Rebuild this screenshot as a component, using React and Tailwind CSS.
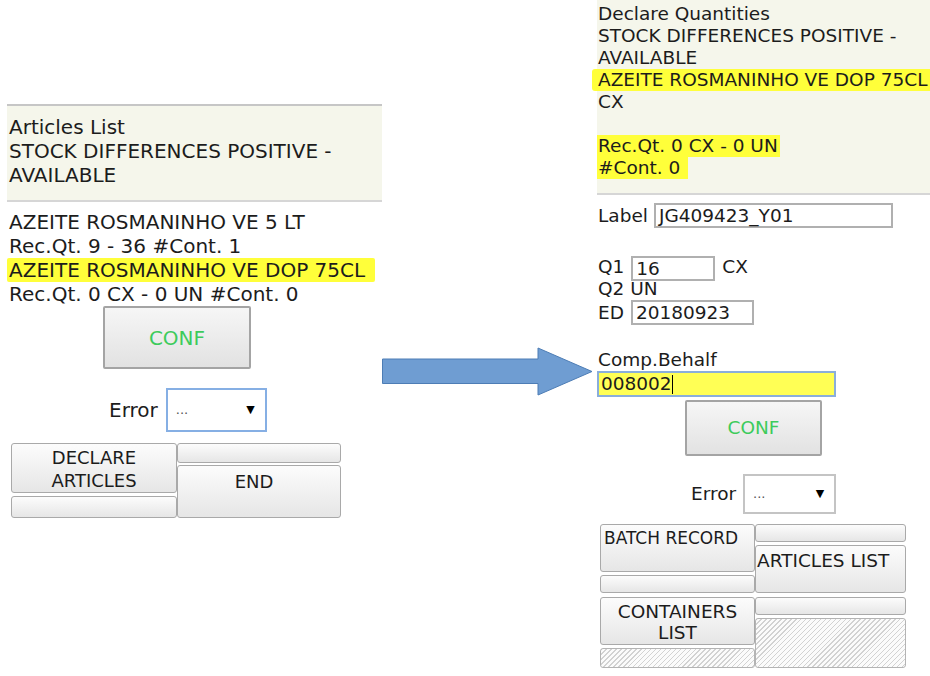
import React from 'react';

const font = "font-['DejaVu_Sans',sans-serif]";
const btn = 'border border-[#a9a9a9] rounded-[3px] bg-linear-to-b from-[#fcfcfc] to-[#e6e6e6]';
const hatch = 'border border-[#b4b4b4] rounded-[3px] bg-[repeating-linear-gradient(135deg,#d2d2d2_0px,#d2d2d2_1px,#fbfbfb_1px,#fbfbfb_3.5px)]';

function Select({ className }) {
  return (
    <div className={`flex items-center justify-between bg-white pl-2 pr-[10px] ${className}`}>
      <span className="text-[13px] text-[#555]">...</span>
      <span className="text-[11px] text-black">▼</span>
    </div>
  );
}

function Arrow() {
  return (
    <svg width="212" height="52" viewBox="0 0 212 52" className="mt-[346px] shrink-0">
      <path
        d="M0.5 13 L156 13 L156 2 L210 25.5 L156 49 L156 37.5 L0.5 37.5 Z"
        fill="#6f9dd2"
        stroke="#4d7db5"
        strokeWidth="1"
      />
    </svg>
  );
}

function LeftPanel() {
  return (
    <div className="w-[375px] mt-[104px] shrink-0 text-[20px] text-[#1c1c1c]">
      <div className="border-t-2 border-[#c6c6c6] border-b-2 border-b-[#d6d6d6] bg-[#f5f6eb] pt-[9px] pb-[13px] pl-[2px] leading-[24px]">
        <div>Articles List</div>
        <div>STOCK DIFFERENCES POSITIVE -</div>
        <div>AVAILABLE</div>
      </div>
      <div className="pt-[8px] pl-[2px] leading-[24px]">
        <div>AZEITE ROSMANINHO VE 5 LT</div>
        <div>Rec.Qt. 9 - 36 #Cont. 1</div>
        <div className="-ml-[2px] pl-[2px] w-[368px] bg-[#ffff3a] rounded-[2px]">AZEITE ROSMANINHO VE DOP 75CL</div>
        <div>Rec.Qt. 0 CX - 0 UN #Cont. 0</div>
      </div>
      <div className="ml-[96px] w-[148px] h-[63px] flex items-center justify-center border-2 border-[#a4a4a4] rounded-[2px] bg-linear-to-b from-[#f6f6f6] to-[#e2e2e2] text-[#3dcb5c]">
        CONF
      </div>
      <div className="ml-[102px] mt-[19px] flex items-center">
        <span>Error</span>
        <Select className="ml-[8px] w-[101px] h-[44px] border-2 border-[#86afe4]" />
      </div>
      <div className="ml-[4px] mt-[11px] w-[330px] flex text-[18px] leading-[23px]">
        <div className="w-[166px] flex flex-col gap-[3px]">
          <div className={`${btn} h-[50px] pt-[2px] text-center`}>DECLARE<br />ARTICLES</div>
          <div className={`${btn} h-[22px]`} />
        </div>
        <div className="flex-1 flex flex-col gap-[2px]">
          <div className={`${btn} h-[20px]`} />
          <div className={`${btn} h-[53px] pt-[4px] pr-[10px] text-center`}>END</div>
        </div>
      </div>
    </div>
  );
}

function Input({ className, children }) {
  return (
    <div className={`flex items-center border-2 border-[#b0b0b0] bg-white px-[3px] ${className}`}>
      {children}
    </div>
  );
}

function RightPanel() {
  return (
    <div className="ml-[3px] flex-1 text-[18.5px] text-[#1c1c1c] leading-[22px]">
      <div className="bg-[#f5f6eb] border-b-2 border-[#d6d6d6] pt-[3px] pb-[14px] pl-[1px]">
        <div>Declare Quantities</div>
        <div>STOCK DIFFERENCES POSITIVE -</div>
        <div>AVAILABLE</div>
        <div className="-ml-[6px] pl-[6px] bg-[#ffff3a] rounded-l-[3px]">AZEITE ROSMANINHO VE DOP 75CL</div>
        <div>CX</div>
        <div className="h-[22px]" />
        <div className="-ml-[1px] pl-[1px] w-[183px] bg-[#ffff3a]">Rec.Qt. 0 CX - 0 UN</div>
        <div className="-ml-[1px] pl-[1px] w-[91px] bg-[#ffff3a]">#Cont. 0</div>
      </div>

      <div className="mt-[8px] pl-[1px] flex items-center">
        <span>Label</span>
        <Input className="ml-[6px] w-[239px] h-[25px]">JG409423_Y01</Input>
      </div>

      <div className="mt-[28px] pl-[1px] flex items-center">
        <span className="-mt-[4px]">Q1</span>
        <Input className="ml-[7px] w-[84px] h-[25px]">16</Input>
        <span className="ml-[7px] -mt-[4px]">CX</span>
      </div>
      <div className="pl-[1px] leading-[16px] h-[16px]">Q2 UN</div>
      <div className="mt-[3px] pl-[1px] flex items-center">
        <span>ED</span>
        <Input className="ml-[7px] w-[123px] h-[25px]">20180923</Input>
      </div>

      <div className="mt-[24px] pl-[1px]">Comp.Behalf</div>
      <div className="w-[239px] h-[26px] flex items-center border-2 border-[#8aaedb] bg-[#ffff55] px-[2px]">
        <span>008002</span>
        <span className="w-[1px] h-[19px] bg-black" />
      </div>

      <div className="ml-[88px] mt-[3px] w-[137px] h-[56px] flex items-center justify-center border-2 border-[#a4a4a4] rounded-[2px] bg-linear-to-b from-[#f6f6f6] to-[#e2e2e2] text-[#3dcb5c]">
        CONF
      </div>

      <div className="ml-[94px] mt-[18px] flex items-center">
        <span>Error</span>
        <Select className="ml-[7px] w-[93px] h-[40px] border-2 border-[#c4c4c4]" />
      </div>

      <div className="ml-[3px] mt-[10px] w-[306px] flex">
        <div className="w-[155px] flex flex-col gap-[3px]">
          <div className={`${btn} h-[48px] pl-[3px] pt-[2px] text-[17px]`}>BATCH RECORD</div>
          <div className={`${btn} h-[18px]`} />
        </div>
        <div className="flex-1 flex flex-col gap-[3px]">
          <div className={`${btn} h-[18px]`} />
          <div className={`${btn} h-[48px] pl-[1px] pt-[4px]`}>ARTICLES LIST</div>
        </div>
      </div>

      <div className="ml-[3px] mt-[4px] w-[306px] flex leading-[21px]">
        <div className="w-[155px] flex flex-col gap-[3px]">
          <div className={`${btn} h-[48px] pt-[3px] text-center`}>CONTAINERS<br />LIST</div>
          <div className={`${hatch} h-[20px]`} />
        </div>
        <div className="flex-1 flex flex-col gap-[3px]">
          <div className={`${btn} h-[18px]`} />
          <div className={`${hatch} h-[50px]`} />
        </div>
      </div>
    </div>
  );
}

export default function App() {
  return (
    <div className={`${font} w-[930px] h-[676px] bg-white flex items-start pl-[7px] overflow-hidden`}>
      <LeftPanel />
      <Arrow />
      <RightPanel />
    </div>
  );
}
